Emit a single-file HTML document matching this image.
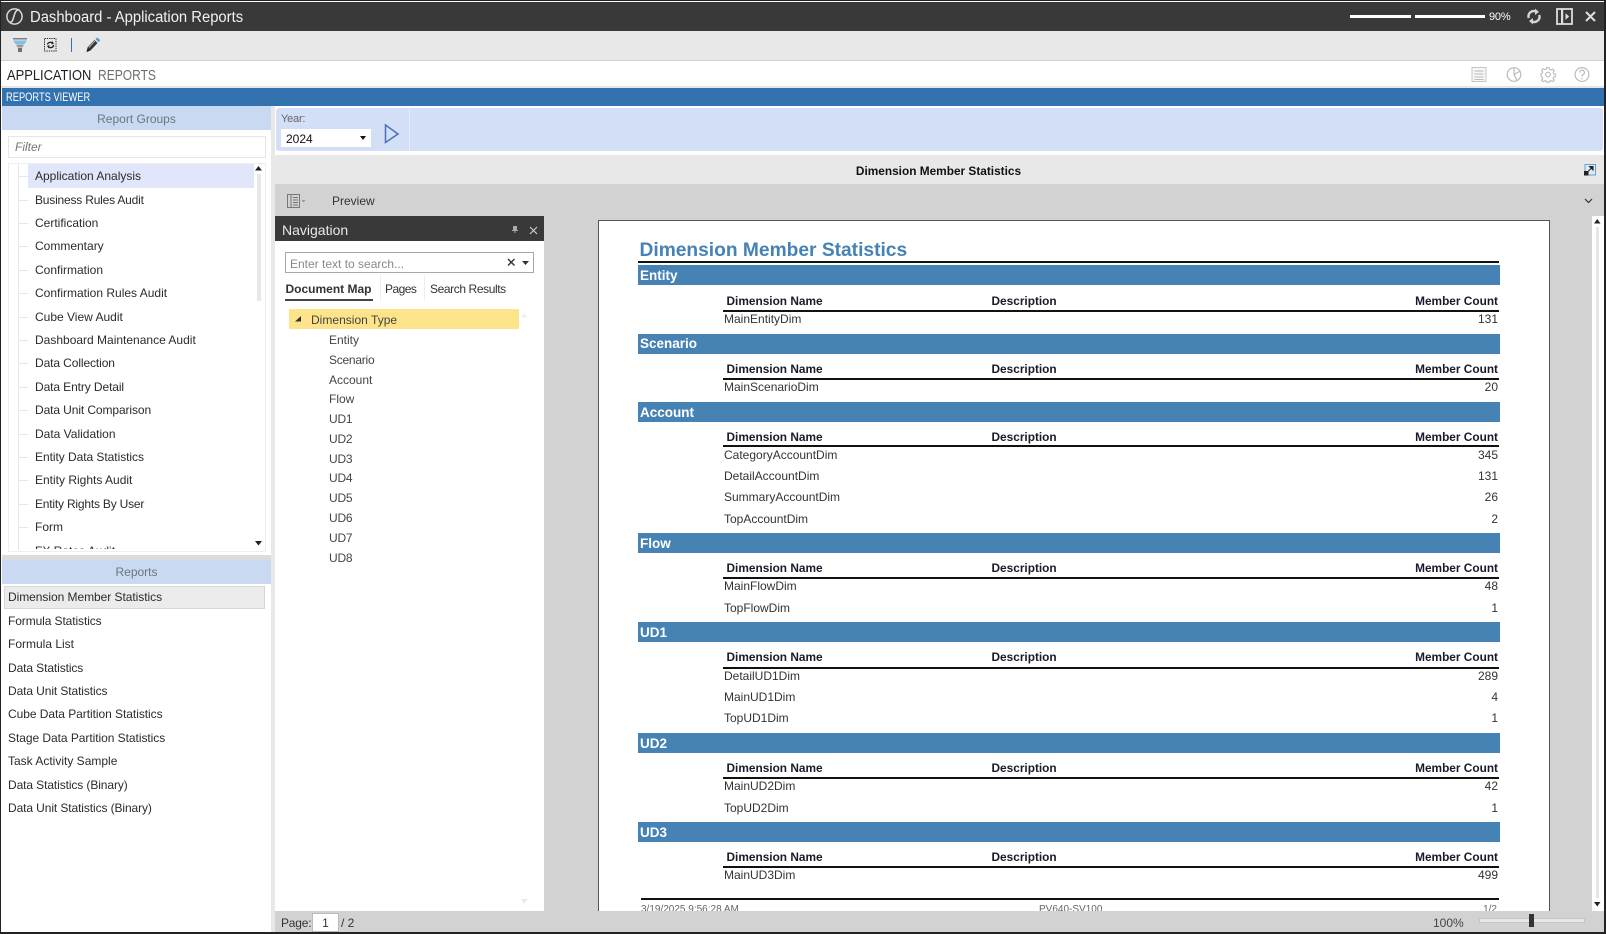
<!DOCTYPE html>
<html><head><meta charset="utf-8"><style>
html,body{margin:0;padding:0;width:1606px;height:934px;overflow:hidden;background:#fff}
body{position:relative;font-family:"Liberation Sans",sans-serif;font-size:12px;color:#2b2b2b}
div,span.a,svg{position:absolute}
.t{position:absolute;white-space:nowrap;height:16px;line-height:16px}
.b{font-weight:bold;color:#1a1a2a;font-size:11.85px}
.r{font-size:12px;color:#333}
.n{text-align:right;right:108px}
.bar{position:absolute;left:638px;width:862px;height:20px;background:#4682b4;color:#fff;font-weight:bold;font-size:13.5px;line-height:21px;text-indent:2px}
.hl{position:absolute;left:723px;width:776px;height:2px;background:#111}
.tl{position:absolute;left:18px;width:10px;height:1px;background:#e6e6e6}
.sx{transform-origin:0 50%}
</style></head><body>
<!-- outer frame -->
<div style="left:0;top:0;width:1606px;height:1px;background:#222"></div>
<div style="left:0;top:932px;width:1606px;height:2px;background:#222"></div>
<div style="left:0;top:0;width:1px;height:934px;background:#222"></div>
<div style="left:1604px;top:0;width:2px;height:934px;background:#222"></div>

<!-- title bar -->
<div style="left:1px;top:2px;width:1603px;height:29px;background:#393939"></div>
<svg style="left:5px;top:7px" width="19" height="19" viewBox="0 0 19 19" fill="none" stroke="#d8d8d8"><circle cx="9.500" cy="9.500" r="7.600" stroke-width="1.500"/><path d="M4.500 15.500C8 15 8 12 9 9s1.500-6 5.500-6.500" stroke-width="1.600"/></svg>
<span class="t sx" style="left:30px;top:9.500px;font-size:15.500px;color:#f2f2f2;transform:scaleX(.955)">Dashboard - Application Reports</span>
<div style="left:1350px;top:15px;width:61px;height:3px;background:#fff"></div>
<div style="left:1415px;top:15px;width:70px;height:3px;background:#fff"></div>
<span class="t" style="left:1489px;top:9px;font-size:11px;color:#fff;letter-spacing:-.2px">90%</span>
<svg style="left:1526px;top:8px" width="16" height="17" viewBox="0 0 16 17" fill="none" stroke="#d4d4d4" stroke-width="2.400"><path d="M2.800 10A5.200 5.200 0 0 1 10 3.600"/><path d="M13.200 7A5.200 5.200 0 0 1 6 13.400"/><path d="M9 .5l4 3.500L9 7z" fill="#d4d4d4" stroke="none"/><path d="M7 16.500l-4-3.500 4-3z" fill="#d4d4d4" stroke="none"/></svg>
<svg style="left:1556px;top:8px" width="17" height="17" viewBox="0 0 17 17" fill="none"><rect x="1" y="1" width="15" height="15" stroke="#ddd" stroke-width="1.800"/><rect x="5" y="1" width="2.200" height="15" fill="#ddd"/><path d="M9.500 5.200v6.600l3.700-3.300z" fill="#ddd"/></svg>
<svg style="left:1585px;top:11px" width="11" height="11" viewBox="0 0 11 11" stroke="#dedede" stroke-width="2"><path d="M1 1l9 9M10 1l-9 9"/></svg>

<!-- toolbar -->
<div style="left:1px;top:31px;width:1603px;height:29px;background:#e8e8e8"></div>
<div style="left:1px;top:60px;width:1603px;height:1px;background:#d0d0d0"></div>
<svg style="left:13px;top:37px" width="15" height="16" viewBox="0 0 15 16"><path d="M0 1h14v1.500H0z" fill="#808080"/><path d="M0 3.500h14l-2.500 3.500h-9z" fill="#7cc0ea"/><path d="M3 7.500h8l-1.500 3h-5z" fill="#9a9a9a"/><path d="M5 11h4v4H5z" fill="#707070"/></svg>
<svg style="left:44px;top:38px" width="13" height="14" viewBox="0 0 13 14" fill="none"><rect x=".5" y=".5" width="11.500" height="12.500" stroke="#222" stroke-dasharray="1.300 1"/><path d="M3.500 6.500a3 2.500 0 0 1 5.500-1M9.500 7a3 2.500 0 0 1-5.500 1.500" stroke="#222" stroke-width="1.300"/><path d="M8 3l2 2.500L7.500 6.500zM5 10.500l-2-2.500 2.500-1z" fill="#222"/></svg>
<div style="left:71px;top:38px;width:1px;height:14px;background:#3a6fb0"></div>
<svg style="left:85px;top:37px" width="16" height="16" viewBox="0 0 16 16"><path d="M1.500 15l1-4.500 7-7.500 3 3-7 7.500z" fill="#333"/><path d="M1.500 15l1.500-3 1.500 1.500z" fill="#111"/><path d="M4 10.500l6-6.500" stroke="#ddd" stroke-width=".7"/><path d="M10.500 2l1.800-1.500 3 2.800-1.800 1.800z" fill="#4a9ad8"/></svg>

<!-- app title -->
<span class="t sx" style="left:6.500px;top:68px;font-size:14.500px;color:#222;transform:scaleX(.89)">APPLICATION</span>
<span class="t sx" style="left:98px;top:68px;font-size:14.500px;color:#6e6e6e;transform:scaleX(.83)">REPORTS</span>
<svg style="left:1471px;top:66px" width="16" height="17" viewBox="0 0 16 17" fill="none" stroke="#c4c4c4"><rect x="1" y="1.500" width="14" height="14" fill="#f6f6f6"/><path d="M3.500 5h9M3.500 8h9M3.500 11h9M3.500 13.500h9" stroke="#bbb"/></svg>
<svg style="left:1506px;top:66px" width="16" height="17" viewBox="0 0 16 17" fill="none" stroke="#bbb" stroke-width="1.200"><circle cx="8" cy="8.500" r="6.800"/><path d="M8 1.700V8.500l3 5.700M8 8.500l5.500-3"/></svg>
<svg style="left:1540px;top:66px" width="16" height="17" viewBox="0 0 16 17" fill="none" stroke="#bbb" stroke-width="1.200"><circle cx="8" cy="8.500" r="2.300"/><path d="M6.800 1.500h2.400l.4 2 1.700.7 1.700-1.100 1.700 1.700-1.100 1.700.7 1.700 2 .4v2.400l-2 .4-.7 1.700 1.100 1.700-1.700 1.700-1.700-1.100-1.700.7-.4 1h-2.400l-.4-1-1.700-.7-1.700 1.100-1.700-1.700 1.100-1.700-.7-1.700-1-.4V8.100l1-.4.7-1.700-1.100-1.700 1.700-1.700 1.700 1.100 1.700-.7z" transform="translate(.4 .2) scale(.94)"/></svg>
<svg style="left:1574px;top:66px" width="16" height="17" viewBox="0 0 16 17" fill="none" stroke="#bbb" stroke-width="1.200"><circle cx="8" cy="8.500" r="6.900"/><path d="M5.800 6.500a2.300 2.300 0 1 1 3.400 2c-.9.500-1.200 1-1.200 2"/><path d="M8 12v1.300"/></svg>

<!-- blue bar -->
<div style="left:1px;top:86px;width:1603px;height:2px;background:#e6e6e6"></div>
<div style="left:2px;top:88px;width:1602px;height:18px;background:#3272ae"></div>
<span class="t sx" style="left:6px;top:90px;font-size:11.500px;color:#fff;transform:scaleX(.81)">REPORTS VIEWER</span>

<!-- left: report groups -->
<div style="left:2px;top:106px;width:269px;height:24px;background:#c9d9f2;text-align:center;line-height:26px;color:#6d7480">Report Groups</div>
<div style="left:8px;top:136px;width:256px;height:20px;border:1px solid #e6e6e6"></div>
<span class="t" style="left:15px;top:139px;font-style:italic;color:#777">Filter</span>
<div style="left:8px;top:163px;width:256px;height:387px;border:1px solid #eee;overflow:hidden">
  <div style="left:9px;top:0;width:1px;height:386px;background:#e6e6e6"></div>
  <div style="left:19px;top:0;width:226px;height:24px;background:#e2e6fb"></div>
</div>
<div class="tl" style="top:176px"></div><div class="tl" style="top:200px"></div><div class="tl" style="top:223px"></div><div class="tl" style="top:246px"></div><div class="tl" style="top:270px"></div><div class="tl" style="top:293px"></div><div class="tl" style="top:317px"></div><div class="tl" style="top:340px"></div><div class="tl" style="top:363px"></div><div class="tl" style="top:387px"></div><div class="tl" style="top:410px"></div><div class="tl" style="top:434px"></div><div class="tl" style="top:457px"></div><div class="tl" style="top:480px"></div><div class="tl" style="top:504px"></div><div class="tl" style="top:527px"></div>
<span class="t" style="left:35px;top:168px">Application Analysis</span>
<span class="t" style="left:35px;top:192px;letter-spacing:-.2px">Business Rules Audit</span>
<span class="t" style="left:35px;top:215px">Certification</span>
<span class="t" style="left:35px;top:238px">Commentary</span>
<span class="t" style="left:35px;top:262px">Confirmation</span>
<span class="t" style="left:35px;top:285px">Confirmation Rules Audit</span>
<span class="t" style="left:35px;top:309px">Cube View Audit</span>
<span class="t" style="left:35px;top:332px">Dashboard Maintenance Audit</span>
<span class="t" style="left:35px;top:355px;letter-spacing:-.1px">Data Collection</span>
<span class="t" style="left:35px;top:379px;letter-spacing:-.1px">Data Entry Detail</span>
<span class="t" style="left:35px;top:402px;letter-spacing:-.1px">Data Unit Comparison</span>
<span class="t" style="left:35px;top:426px">Data Validation</span>
<span class="t" style="left:35px;top:449px;letter-spacing:-.05px">Entity Data Statistics</span>
<span class="t" style="left:35px;top:472px">Entity Rights Audit</span>
<span class="t" style="left:35px;top:496px;letter-spacing:-.2px">Entity Rights By User</span>
<span class="t" style="left:35px;top:519px">Form</span>
<div style="left:35px;top:544px;width:200px;height:5px;overflow:hidden"><span class="t" style="left:0;top:-1px">FX Rates Audit</span></div>
<div style="left:257px;top:174px;width:4px;height:127px;background:#e8e8e8"></div>
<svg style="left:255px;top:166px" width="8" height="5"><path d="M0 4.500h7L3.500 0z" fill="#222"/></svg>
<svg style="left:255px;top:541px" width="8" height="5"><path d="M0 0h7L3.500 4.500z" fill="#222"/></svg>

<!-- left: reports -->
<div style="left:2px;top:555px;width:269px;height:5px;background:#dcdcdc"></div>
<div style="left:2px;top:560px;width:269px;height:24px;background:#c9d9f2;text-align:center;line-height:24px;color:#6d7480">Reports</div>
<div style="left:4px;top:586px;width:259px;height:21px;background:#ebebeb;border:1px solid #d6d6d6"></div>
<span class="t" style="left:8px;top:589px;letter-spacing:-.05px">Dimension Member Statistics</span>
<span class="t" style="left:8px;top:613px;letter-spacing:-.1px">Formula Statistics</span>
<span class="t" style="left:8px;top:636px">Formula List</span>
<span class="t" style="left:8px;top:660px;letter-spacing:-.1px">Data Statistics</span>
<span class="t" style="left:8px;top:683px;letter-spacing:-.1px">Data Unit Statistics</span>
<span class="t" style="left:8px;top:706px;letter-spacing:-.05px">Cube Data Partition Statistics</span>
<span class="t" style="left:8px;top:730px;letter-spacing:-.05px">Stage Data Partition Statistics</span>
<span class="t" style="left:8px;top:753px">Task Activity Sample</span>
<span class="t" style="left:8px;top:777px;letter-spacing:-.1px">Data Statistics (Binary)</span>
<span class="t" style="left:8px;top:800px;letter-spacing:-.1px">Data Unit Statistics (Binary)</span>
<div style="left:271px;top:106px;width:4px;height:826px;background:#e8e8e8"></div>

<!-- parameter bar -->
<div style="left:275px;top:106px;width:1329px;height:49px;background:#fff"></div>
<div style="left:276px;top:108px;width:1327px;height:43px;background:#d3dff6;border-radius:3px"></div>
<div style="left:409px;top:108px;width:1px;height:43px;background:#e6ecf9"></div>
<span class="t" style="left:281px;top:110.500px;font-size:11px;color:#666;letter-spacing:-.2px">Year:</span>
<div style="left:281px;top:129px;width:90px;height:18px;background:#fff"></div>
<span class="t" style="left:286px;top:131px;color:#111">2024</span>
<svg style="left:360px;top:136px" width="6" height="4"><path d="M0 0h6L3 4z" fill="#111"/></svg>
<svg style="left:384px;top:123px" width="16" height="22" viewBox="0 0 16 22" fill="none"><path d="M1.500 2L14 11 1.500 19.500z" stroke="#4a70b8" stroke-width="1.500"/></svg>

<!-- title band -->
<div style="left:275px;top:155px;width:1329px;height:29px;background:#e8e8e8;text-align:center;line-height:33px;font-weight:bold;color:#111;font-size:11.850px;text-indent:-2px">Dimension Member Statistics</div>
<svg style="left:1584px;top:164px" width="12" height="12" viewBox="0 0 12 12" fill="none"><rect x="1" y=".5" width="10.500" height="10.500" stroke="#55a5e0"/><rect x="0" y="7" width="4.500" height="4.500" fill="#222"/><path d="M4 7.500L8.500 3M5.500 2.500h3.500v3.500z" stroke="#222" fill="#222"/></svg>

<!-- preview area -->
<div style="left:275px;top:184px;width:1329px;height:748px;background:#d2d2d2"></div>
<svg style="left:287px;top:194px" width="20" height="15" viewBox="0 0 20 15" fill="none" stroke="#777"><rect x=".5" y=".5" width="12" height="13"/><path d="M4 .5v13M6 3.500h5M6 6h5M6 8.500h5M6 11h5"/><path d="M14.500 6h4l-2 2.500z" fill="#999" stroke="none"/></svg>
<span class="t" style="left:332px;top:193px;color:#333">Preview</span>
<svg style="left:1584px;top:198px" width="9" height="6" fill="none" stroke="#333" stroke-width="1.200"><path d="M1 1l3.500 3.500L8 1"/></svg>

<!-- navigation -->
<div style="left:275px;top:216px;width:269px;height:25px;background:#393939"></div>
<span class="t" style="left:282px;top:222px;font-size:14px;color:#e8e8e8">Navigation</span>
<svg style="left:512px;top:226px" width="6" height="7"><path d="M1 0h4v4h1v1H3.500v2h-1V5H0V4h1z" fill="#aaa"/></svg>
<svg style="left:529px;top:226px" width="9" height="9" stroke="#ccc" stroke-width="1.200"><path d="M1 1l7 7M8 1l-7 7"/></svg>
<div style="left:275px;top:241px;width:269px;height:670px;background:#fff"></div>
<div style="left:285px;top:252px;width:247px;height:19px;border:1px solid #a8a8a8"></div>
<span class="t" style="left:290px;top:256px;color:#888">Enter text to search...</span>
<svg style="left:507px;top:258px" width="9" height="9" stroke="#333" stroke-width="1.400"><path d="M1 1l6.500 6.500M7.500 1l-6.500 6.500"/></svg>
<svg style="left:522px;top:261px" width="7" height="4"><path d="M0 0h7L3.500 4z" fill="#333"/></svg>
<span class="t" style="left:285.500px;top:281px;font-weight:bold;color:#333">Document Map</span>
<div style="left:285px;top:299px;width:88px;height:2px;background:#444"></div>
<div style="left:380px;top:275px;width:1px;height:26px;background:#eee"></div>
<span class="t" style="left:385px;top:281px;color:#333;letter-spacing:-.55px">Pages</span>
<div style="left:424px;top:275px;width:1px;height:26px;background:#eee"></div>
<span class="t" style="left:430px;top:281px;color:#333;letter-spacing:-.4px">Search Results</span>
<div style="left:289px;top:309px;width:230px;height:20px;background:#fde38a"></div>
<svg style="left:295px;top:316px" width="7" height="6"><path d="M6 0v5.500H0z" fill="#333"/></svg>
<span class="t" style="left:311px;top:312px;color:#444;letter-spacing:.02px">Dimension Type</span>
<svg style="left:521px;top:313px" width="7" height="5"><path d="M0 4.500h6.500L3.250 0z" fill="#eee"/></svg>
<svg style="left:521px;top:899px" width="7" height="5"><path d="M0 0h6.500L3.250 4.500z" fill="#e8e8e8"/></svg>
<span class="t" style="left:329px;top:332px;color:#444">Entity</span>
<span class="t" style="left:329px;top:352px;color:#444;letter-spacing:-.25px">Scenario</span>
<span class="t" style="left:329px;top:372px;color:#444">Account</span>
<span class="t" style="left:329px;top:391px;color:#444">Flow</span>
<span class="t" style="left:329px;top:411px;color:#444;letter-spacing:-.2px">UD1</span>
<span class="t" style="left:329px;top:431px;color:#444;letter-spacing:-.2px">UD2</span>
<span class="t" style="left:329px;top:451px;color:#444;letter-spacing:-.2px">UD3</span>
<span class="t" style="left:329px;top:470px;color:#444;letter-spacing:-.2px">UD4</span>
<span class="t" style="left:329px;top:490px;color:#444;letter-spacing:-.2px">UD5</span>
<span class="t" style="left:329px;top:510px;color:#444;letter-spacing:-.2px">UD6</span>
<span class="t" style="left:329px;top:530px;color:#444;letter-spacing:-.2px">UD7</span>
<span class="t" style="left:329px;top:550px;color:#444;letter-spacing:-.2px">UD8</span>

<!-- report page -->
<div style="left:598px;top:220px;width:950px;height:691px;background:#fff;border:1px solid #555;border-bottom:0"></div>
<span class="t" style="left:639.500px;top:239.500px;height:22px;line-height:22px;font-size:19.200px;font-weight:bold;color:#4682b4">Dimension Member Statistics</span>
<div style="left:638px;top:261px;width:861px;height:2px;background:#111"></div>

<div class="bar" style="top:265px">Entity</div>
<span class="t b" style="left:726.500px;top:293px">Dimension Name</span><span class="t b" style="left:991.500px;top:293px">Description</span><span class="t b n" style="top:293px">Member Count</span>
<div class="hl" style="top:310px"></div>
<span class="t r" style="left:724px;top:311px">MainEntityDim</span><span class="t r n" style="top:311px">131</span>

<div class="bar" style="top:334px;line-height:20px">Scenario</div>
<span class="t b" style="left:726.500px;top:361px">Dimension Name</span><span class="t b" style="left:991.500px;top:361px">Description</span><span class="t b n" style="top:361px">Member Count</span>
<div class="hl" style="top:378px"></div>
<span class="t r" style="left:724px;top:379px">MainScenarioDim</span><span class="t r n" style="top:379px">20</span>

<div class="bar" style="top:402px">Account</div>
<span class="t b" style="left:726.500px;top:428.500px">Dimension Name</span><span class="t b" style="left:991.500px;top:428.500px">Description</span><span class="t b n" style="top:428.500px">Member Count</span>
<div class="hl" style="top:445px"></div>
<span class="t r" style="left:724px;top:447px">CategoryAccountDim</span><span class="t r n" style="top:447px">345</span>
<span class="t r" style="left:724px;top:468px">DetailAccountDim</span><span class="t r n" style="top:468px">131</span>
<span class="t r" style="left:724px;top:489px">SummaryAccountDim</span><span class="t r n" style="top:489px">26</span>
<span class="t r" style="left:724px;top:510.500px">TopAccountDim</span><span class="t r n" style="top:510.500px">2</span>

<div class="bar" style="top:533px">Flow</div>
<span class="t b" style="left:726.500px;top:560px">Dimension Name</span><span class="t b" style="left:991.500px;top:560px">Description</span><span class="t b n" style="top:560px">Member Count</span>
<div class="hl" style="top:577px"></div>
<span class="t r" style="left:724px;top:578px">MainFlowDim</span><span class="t r n" style="top:578px">48</span>
<span class="t r" style="left:724px;top:599.500px">TopFlowDim</span><span class="t r n" style="top:599.500px">1</span>

<div class="bar" style="top:622px">UD1</div>
<span class="t b" style="left:726.500px;top:649px">Dimension Name</span><span class="t b" style="left:991.500px;top:649px">Description</span><span class="t b n" style="top:649px">Member Count</span>
<div class="hl" style="top:667px"></div>
<span class="t r" style="left:724px;top:668px">DetailUD1Dim</span><span class="t r n" style="top:668px">289</span>
<span class="t r" style="left:724px;top:689px">MainUD1Dim</span><span class="t r n" style="top:689px">4</span>
<span class="t r" style="left:724px;top:710px">TopUD1Dim</span><span class="t r n" style="top:710px">1</span>

<div class="bar" style="top:733px">UD2</div>
<span class="t b" style="left:726.500px;top:760px">Dimension Name</span><span class="t b" style="left:991.500px;top:760px">Description</span><span class="t b n" style="top:760px">Member Count</span>
<div class="hl" style="top:777px"></div>
<span class="t r" style="left:724px;top:778px">MainUD2Dim</span><span class="t r n" style="top:778px">42</span>
<span class="t r" style="left:724px;top:799.500px">TopUD2Dim</span><span class="t r n" style="top:799.500px">1</span>

<div class="bar" style="top:822px">UD3</div>
<span class="t b" style="left:726.500px;top:849px">Dimension Name</span><span class="t b" style="left:991.500px;top:849px">Description</span><span class="t b n" style="top:849px">Member Count</span>
<div class="hl" style="top:866px"></div>
<span class="t r" style="left:724px;top:867px">MainUD3Dim</span><span class="t r n" style="top:867px">499</span>

<div style="left:641px;top:898px;width:858px;height:2px;background:#111"></div>
<div style="left:641px;top:902px;width:858px;height:9px;overflow:hidden">
  <span class="t" style="left:0;top:0;font-size:10px;color:#666">3/19/2025 9:56:28 AM</span>
  <span class="t" style="left:398px;top:0;font-size:10px;color:#666">PV640-SV100</span>
  <span class="t" style="right:2px;top:0;font-size:10px;color:#666">1/2</span>
</div>

<!-- right scrollbar -->
<div style="left:1592px;top:216px;width:12px;height:695px;background:#fff"></div>
<div style="left:1596px;top:227px;width:3px;height:671px;background:#e6e6e6"></div>
<svg style="left:1594px;top:219px" width="7" height="5"><path d="M0 4.500h6.500L3.250 0z" fill="#222"/></svg>
<svg style="left:1594px;top:902px" width="7" height="5"><path d="M0 0h6.500L3.250 4.500z" fill="#222"/></svg>

<!-- status bar -->
<div style="left:275px;top:911px;width:1329px;height:21px;background:#d2d2d2"></div>
<span class="t" style="left:281px;top:915px;color:#333;letter-spacing:-.2px">Page:</span>
<div style="left:312px;top:913px;width:25px;height:17px;background:#fff;border:1px solid #bbb;text-align:center;line-height:18px;color:#333">1</div>
<span class="t" style="left:341px;top:915px;color:#333">/ 2</span>
<span class="t" style="left:1433px;top:915px;color:#444">100%</span>
<div style="left:1479px;top:918px;width:104px;height:3px;background:#e8e8e8;border:1px solid #c4c4c4"></div>
<div style="left:1529px;top:914px;width:5px;height:13px;background:#333"></div>
</body></html>
